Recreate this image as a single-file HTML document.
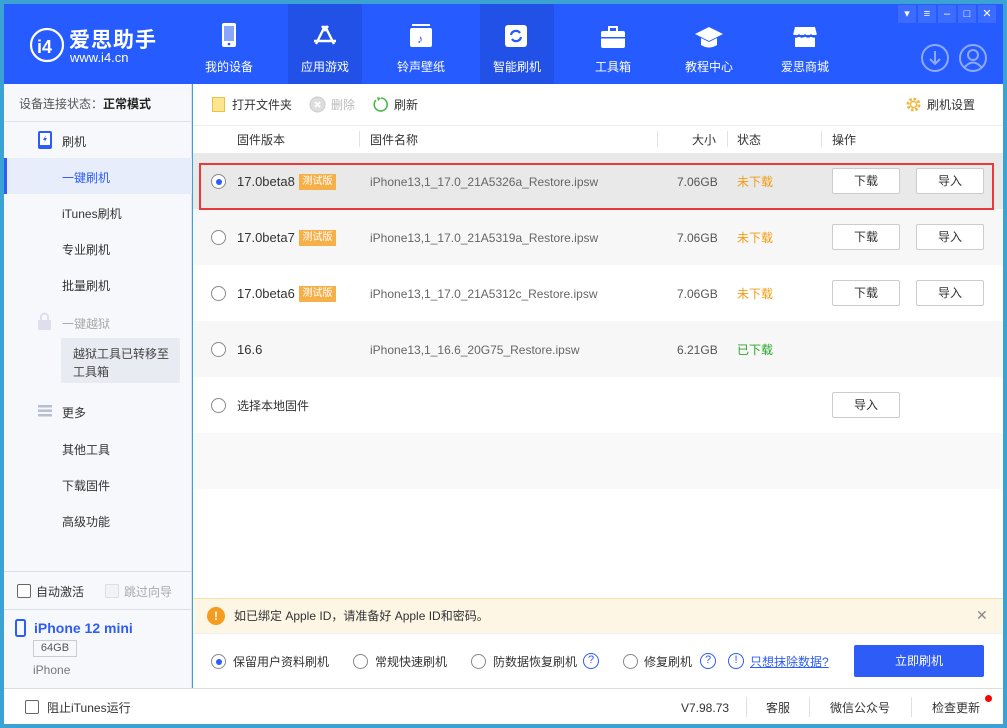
<!DOCTYPE html>
<html><head><meta charset="utf-8"><style>
*{margin:0;padding:0;box-sizing:border-box}
body{width:1007px;height:728px;overflow:hidden;background:#3aa3d4;font-family:"Liberation Sans","Noto Sans CJK SC",sans-serif;font-size:12px;color:#333;position:relative}
.a{position:absolute}
.hdr{left:4px;top:4px;width:999px;height:80px;background:#265cff}
.nav{top:4px;width:74px;height:80px;color:#fff;text-align:center;font-size:12px}
.nav .l{position:absolute;top:54px;width:100%}
.nav.sel{background:#2151e6}
.side{left:4px;top:84px;width:188px;height:604px;background:#f7f8fc;border-right:1px solid #dde0e8}
.si{position:absolute;left:58px;font-size:12px;color:#333}
.main{left:193px;top:84px;width:810px;height:604px;background:#fff}
.row{position:absolute;left:193px;width:810px;height:56px}
.rad{position:absolute;width:15px;height:15px;border:1px solid #888;border-radius:50%;background:#fff}
.tag{position:absolute;background:#f6b04a;color:#fff;font-size:10px;width:37px;height:16px;line-height:16px;text-align:center}
.btn{position:absolute;width:68px;height:26px;border:1px solid #ccc;background:#fff;border-radius:2px;text-align:center;line-height:24px;font-size:12px}
.t{position:absolute;white-space:nowrap;line-height:16px}
.wb{top:5px;width:18px;height:18px;background:#3b6cff;color:#fff;font-size:11px;text-align:center;line-height:18px}
</style></head><body>
<div class="a hdr"></div>
<svg class="a" style="left:29px;top:27px" width="36" height="36" viewBox="0 0 36 36"><circle cx="18" cy="18" r="16" fill="none" stroke="#fff" stroke-width="2.2"/><text x="8" y="26" fill="#fff" font-size="18" font-weight="bold" font-family="Liberation Sans">i4</text></svg>
<div class="t" style="left:69px;top:29px;color:#fff;font-size:21px;line-height:24px;font-weight:bold;letter-spacing:1px">爱思助手</div>
<div class="t" style="left:70px;top:50px;color:#fff;font-size:13px">www.i4.cn</div>
<div class="a nav" style="left:192px"><svg class="a" style="left:29px;top:18px" width="16" height="26"><rect x="1" y="1" width="14" height="24" rx="2" fill="#fff"/><rect x="3" y="4" width="10" height="15" fill="#8aa6ff"/><circle cx="8" cy="22" r="1.3" fill="#265cff"/></svg><div class="l">我的设备</div></div>
<div class="a nav sel" style="left:288px"><svg class="a" style="left:24px;top:20px" width="26" height="24"><path d="M13 2 L4 20 M13 2 L22 20 M2 17 H24 M10 2 l3 4 l3 -4" stroke="#fff" stroke-width="2.4" fill="none"/></svg><div class="l">应用游戏</div></div>
<div class="a nav" style="left:384px"><svg class="a" style="left:25px;top:20px" width="24" height="24"><rect x="3" y="0" width="18" height="2" fill="#fff"/><rect x="1" y="4" width="22" height="19" rx="2" fill="#fff"/><text x="8" y="19" font-size="12" fill="#265cff">♪</text></svg><div class="l">铃声壁纸</div></div>
<div class="a nav sel" style="left:480px"><svg class="a" style="left:25px;top:21px" width="24" height="24"><rect x="0" y="0" width="22" height="22" rx="3" fill="#fff"/><path d="M6 10 a5 5 0 0 1 9 -2 M16 12 a5 5 0 0 1 -9 2" stroke="#265cff" stroke-width="2.2" fill="none"/></svg><div class="l">智能刷机</div></div>
<div class="a nav" style="left:576px"><svg class="a" style="left:24px;top:22px" width="26" height="24"><rect x="1" y="5" width="24" height="17" rx="2" fill="#fff"/><rect x="9" y="1" width="8" height="5" fill="none" stroke="#fff" stroke-width="2"/><rect x="1" y="11" width="24" height="1.5" fill="#265cff"/></svg><div class="l">工具箱</div></div>
<div class="a nav" style="left:672px"><svg class="a" style="left:22px;top:22px" width="30" height="24"><path d="M15 1 L29 8 L15 15 L1 8Z" fill="#fff"/><path d="M7 12 V19 Q15 24 23 19 V12 L15 16Z" fill="#fff"/></svg><div class="l">教程中心</div></div>
<div class="a nav" style="left:768px"><svg class="a" style="left:24px;top:21px" width="26" height="24"><path d="M3 2 H23 L25 10 H1Z" fill="#fff"/><rect x="3" y="12" width="20" height="10" fill="#fff"/><path d="M1 10 q3 4 6 0 q3 4 6 0 q3 4 6 0 q3 4 6 0" stroke="#265cff" stroke-width="1.5" fill="none"/></svg><div class="l">爱思商城</div></div>
<div class="a wb" style="left:898px">▾</div><div class="a wb" style="left:918px">≡</div><div class="a wb" style="left:938px">–</div><div class="a wb" style="left:958px">□</div><div class="a wb" style="left:978px">✕</div>
<svg class="a" style="left:920px;top:43px" width="30" height="30"><circle cx="15" cy="15" r="13" fill="none" stroke="#8fa9ff" stroke-width="2"/><path d="M15 8 V21 M10 16 L15 21 L20 16" stroke="#8fa9ff" stroke-width="2" fill="none"/></svg>
<svg class="a" style="left:958px;top:43px" width="30" height="30"><circle cx="15" cy="15" r="13" fill="none" stroke="#8fa9ff" stroke-width="2"/><circle cx="15" cy="12" r="5" fill="none" stroke="#8fa9ff" stroke-width="2"/><path d="M6 25 Q15 14 24 25" stroke="#8fa9ff" stroke-width="2" fill="none"/></svg>

<div class="a side"></div>
<div class="t" style="left:19px;top:96px;color:#555">设备连接状态：<b style="color:#222">正常模式</b></div>
<div class="a" style="left:4px;top:121px;width:188px;height:1px;background:#e0e2e8"></div>
<svg class="a" style="left:37px;top:131px" width="16" height="19"><rect x="1" y="0" width="14" height="18" rx="2" fill="#2d5cf6"/><rect x="3" y="2" width="10" height="12" fill="#fff"/><path d="M9 4 L6 9 H8 L7 12 L10 7 H8Z" fill="#2d5cf6"/></svg>
<div class="si" style="top:133px;left:62px">刷机</div>
<div class="a" style="left:4px;top:158px;width:188px;height:36px;background:#e8edfc"></div>
<div class="a" style="left:4px;top:158px;width:3px;height:36px;background:#2d5cf6"></div>
<div class="si" style="top:169px;left:62px;color:#2d5cf6">一键刷机</div>
<div class="si" style="top:205px;left:62px">iTunes刷机</div>
<div class="si" style="top:241px;left:62px">专业刷机</div>
<div class="si" style="top:277px;left:62px">批量刷机</div>
<svg class="a" style="left:37px;top:312px" width="15" height="18"><path d="M4 8 V5 a3.5 3.5 0 0 1 7 0 V8" stroke="#dde0ea" stroke-width="2" fill="none"/><rect x="1" y="8" width="13" height="10" rx="1" fill="#dde0ea"/></svg>
<div class="si" style="top:315px;left:62px;color:#aaa">一键越狱</div>
<div class="a" style="left:61px;top:338px;width:119px;height:45px;background:#e9ebf2;border-radius:2px"></div>
<div class="t" style="left:73px;top:345px;line-height:18px;color:#444">越狱工具已转移至<br>工具箱</div>
<svg class="a" style="left:38px;top:405px" width="14" height="12"><rect y="0" width="14" height="2.5" fill="#b9bed0"/><rect y="4.5" width="14" height="2.5" fill="#b9bed0"/><rect y="9" width="14" height="2.5" fill="#b9bed0"/></svg>
<div class="si" style="top:404px;left:62px">更多</div>
<div class="si" style="top:441px;left:62px">其他工具</div>
<div class="si" style="top:477px;left:62px">下载固件</div>
<div class="si" style="top:513px;left:62px">高级功能</div>
<div class="a" style="left:4px;top:571px;width:188px;height:1px;background:#dcdee4"></div>
<div class="a" style="left:17px;top:584px;width:14px;height:14px;border:1px solid #666;border-radius:2px;background:#fff"></div>
<div class="t" style="left:36px;top:584px">自动激活</div>
<div class="a" style="left:105px;top:584px;width:14px;height:14px;border:1px solid #ddd;border-radius:2px;background:#f2f3f6"></div>
<div class="t" style="left:124px;top:584px;color:#aaa">跳过向导</div>
<div class="a" style="left:4px;top:609px;width:188px;height:1px;background:#dcdee4"></div>
<svg class="a" style="left:15px;top:619px" width="11" height="18"><rect x="1" y="1" width="9" height="16" rx="1.5" fill="none" stroke="#2d5cf6" stroke-width="2"/></svg>
<div class="t" style="left:34px;top:620px;color:#2d5cf6;font-size:14px;font-weight:bold">iPhone 12 mini</div>
<div class="a" style="left:33px;top:640px;width:44px;height:17px;border:1px solid #ccc;font-size:11px;text-align:center;line-height:15px;color:#555">64GB</div>
<div class="t" style="left:33px;top:662px;color:#777">iPhone</div>

<div class="a main"></div>
<div class="a" style="left:212px;top:97px;width:13px;height:15px;background:#fde58e;border:1px solid #e8c24a"></div>
<div class="t" style="left:232px;top:97px">打开文件夹</div>
<svg class="a" style="left:309px;top:96px" width="17" height="17"><circle cx="8.5" cy="8.5" r="7.5" fill="#ddd" stroke="#ccc"/><path d="M6 6 L11 11 M11 6 L6 11" stroke="#fff" stroke-width="1.6"/></svg>
<div class="t" style="left:331px;top:97px;color:#bbb">删除</div>
<svg class="a" style="left:372px;top:96px" width="17" height="17"><path d="M4 4 A6.5 6.5 0 1 0 9 2" stroke="#4ab84a" stroke-width="1.6" fill="none"/><path d="M5 1 L9 2 L6 5" fill="#4ab84a"/></svg>
<div class="t" style="left:394px;top:97px">刷新</div>
<svg class="a" style="left:905px;top:96px" width="17" height="17"><circle cx="8.5" cy="8.5" r="5.5" fill="none" stroke="#f0b73d" stroke-width="3" stroke-dasharray="2.5 1.8"/><circle cx="8.5" cy="8.5" r="3" fill="none" stroke="#f0b73d" stroke-width="1.4"/></svg>
<div class="t" style="left:927px;top:97px">刷机设置</div>
<div class="a" style="left:193px;top:125px;width:810px;height:1px;background:#eee"></div>
<div class="t" style="left:237px;top:132px">固件版本</div>
<div class="a" style="left:359px;top:131px;width:1px;height:16px;background:#e2e2e2"></div>
<div class="t" style="left:370px;top:132px">固件名称</div>
<div class="a" style="left:657px;top:131px;width:1px;height:16px;background:#e2e2e2"></div>
<div class="t" style="left:692px;top:132px">大小</div>
<div class="a" style="left:727px;top:131px;width:1px;height:16px;background:#e2e2e2"></div>
<div class="t" style="left:737px;top:132px">状态</div>
<div class="a" style="left:821px;top:131px;width:1px;height:16px;background:#e2e2e2"></div>
<div class="t" style="left:832px;top:132px">操作</div>

<div class="row" style="top:153px;background:#e9e9e9"></div>
<div class="row" style="top:209px;background:#f7f7f7"></div>
<div class="row" style="top:265px;background:#fff"></div>
<div class="row" style="top:321px;background:#f7f7f7"></div>
<div class="row" style="top:377px;background:#fff"></div>
<div class="row" style="top:433px;background:#f9f9f9"></div>

<div class="rad" style="left:211px;top:174px"></div><div class="a" style="left:216px;top:179px;width:6px;height:6px;border-radius:50%;background:#2d5cf6"></div>
<div class="t" style="left:237px;top:174px;font-size:13px">17.0beta8</div><div class="tag" style="left:299px;top:174px">测试版</div>
<div class="t" style="left:370px;top:174px;color:#666">iPhone13,1_17.0_21A5326a_Restore.ipsw</div>
<div class="t" style="left:677px;top:174px;color:#555">7.06GB</div>
<div class="t" style="left:737px;top:174px;color:#f39c12">未下载</div>
<div class="btn" style="left:832px;top:168px">下载</div><div class="btn" style="left:916px;top:168px">导入</div>

<div class="rad" style="left:211px;top:230px"></div>
<div class="t" style="left:237px;top:230px;font-size:13px">17.0beta7</div><div class="tag" style="left:299px;top:230px">测试版</div>
<div class="t" style="left:370px;top:230px;color:#666">iPhone13,1_17.0_21A5319a_Restore.ipsw</div>
<div class="t" style="left:677px;top:230px;color:#555">7.06GB</div>
<div class="t" style="left:737px;top:230px;color:#f39c12">未下载</div>
<div class="btn" style="left:832px;top:224px">下载</div><div class="btn" style="left:916px;top:224px">导入</div>

<div class="rad" style="left:211px;top:286px"></div>
<div class="t" style="left:237px;top:286px;font-size:13px">17.0beta6</div><div class="tag" style="left:299px;top:286px">测试版</div>
<div class="t" style="left:370px;top:286px;color:#666">iPhone13,1_17.0_21A5312c_Restore.ipsw</div>
<div class="t" style="left:677px;top:286px;color:#555">7.06GB</div>
<div class="t" style="left:737px;top:286px;color:#f39c12">未下载</div>
<div class="btn" style="left:832px;top:280px">下载</div><div class="btn" style="left:916px;top:280px">导入</div>

<div class="rad" style="left:211px;top:342px"></div>
<div class="t" style="left:237px;top:342px;font-size:13px">16.6</div>
<div class="t" style="left:370px;top:342px;color:#666">iPhone13,1_16.6_20G75_Restore.ipsw</div>
<div class="t" style="left:677px;top:342px;color:#555">6.21GB</div>
<div class="t" style="left:737px;top:342px;color:#2aa52a">已下载</div>

<div class="rad" style="left:211px;top:398px"></div>
<div class="t" style="left:237px;top:398px">选择本地固件</div>
<div class="btn" style="left:832px;top:392px">导入</div>

<div class="a" style="left:199px;top:163px;width:795px;height:47px;border:2px solid #e83a3a"></div>

<div class="a" style="left:193px;top:598px;width:810px;height:36px;background:#fdf6e5;border-top:1px solid #f6e2a8;border-bottom:1px solid #eee"></div>
<div class="a" style="left:207px;top:607px;width:18px;height:18px;border-radius:50%;background:#f39c1f;color:#fff;font-weight:bold;text-align:center;line-height:18px;font-size:12px">!</div>
<div class="t" style="left:234px;top:608px">如已绑定 Apple ID，请准备好 Apple ID和密码。</div>
<div class="t" style="left:976px;top:607px;color:#888;font-size:14px">✕</div>

<div class="rad" style="left:211px;top:654px"></div><div class="a" style="left:216px;top:659px;width:6px;height:6px;border-radius:50%;background:#2d5cf6"></div>
<div class="t" style="left:233px;top:654px">保留用户资料刷机</div>
<div class="rad" style="left:353px;top:654px"></div><div class="t" style="left:375px;top:654px">常规快速刷机</div>
<div class="rad" style="left:471px;top:654px"></div><div class="t" style="left:493px;top:654px">防数据恢复刷机</div>
<div class="a" style="left:583px;top:653px;width:16px;height:16px;border:1.5px solid #2d5cf6;border-radius:50%;color:#2d5cf6;font-size:11px;text-align:center;line-height:13px">?</div>
<div class="rad" style="left:623px;top:654px"></div><div class="t" style="left:644px;top:654px">修复刷机</div>
<div class="a" style="left:700px;top:653px;width:16px;height:16px;border:1.5px solid #2d5cf6;border-radius:50%;color:#2d5cf6;font-size:11px;text-align:center;line-height:13px">?</div>
<div class="a" style="left:728px;top:653px;width:16px;height:16px;border:1.5px solid #2d5cf6;border-radius:50%;color:#2d5cf6;font-size:11px;text-align:center;line-height:13px">!</div>
<div class="t" style="left:750px;top:654px;color:#2d5cf6;text-decoration:underline">只想抹除数据?</div>
<div class="a" style="left:854px;top:645px;width:130px;height:32px;background:#2d5cf6;border-radius:2px;color:#fff;text-align:center;line-height:32px">立即刷机</div>

<div class="a" style="left:4px;top:688px;width:999px;height:36px;background:#fff;border-top:1px solid #ddd"></div>
<div class="a" style="left:25px;top:700px;width:14px;height:14px;border:1px solid #666;border-radius:2px"></div>
<div class="t" style="left:47px;top:700px">阻止iTunes运行</div>
<div class="t" style="left:681px;top:700px">V7.98.73</div>
<div class="a" style="left:746px;top:697px;width:1px;height:20px;background:#e0e0e0"></div>
<div class="t" style="left:766px;top:700px">客服</div>
<div class="a" style="left:809px;top:697px;width:1px;height:20px;background:#e0e0e0"></div>
<div class="t" style="left:830px;top:700px">微信公众号</div>
<div class="a" style="left:911px;top:697px;width:1px;height:20px;background:#e0e0e0"></div>
<div class="t" style="left:932px;top:700px">检查更新</div>
<div class="a" style="left:985px;top:695px;width:7px;height:7px;border-radius:50%;background:#f00"></div>
</body></html>
